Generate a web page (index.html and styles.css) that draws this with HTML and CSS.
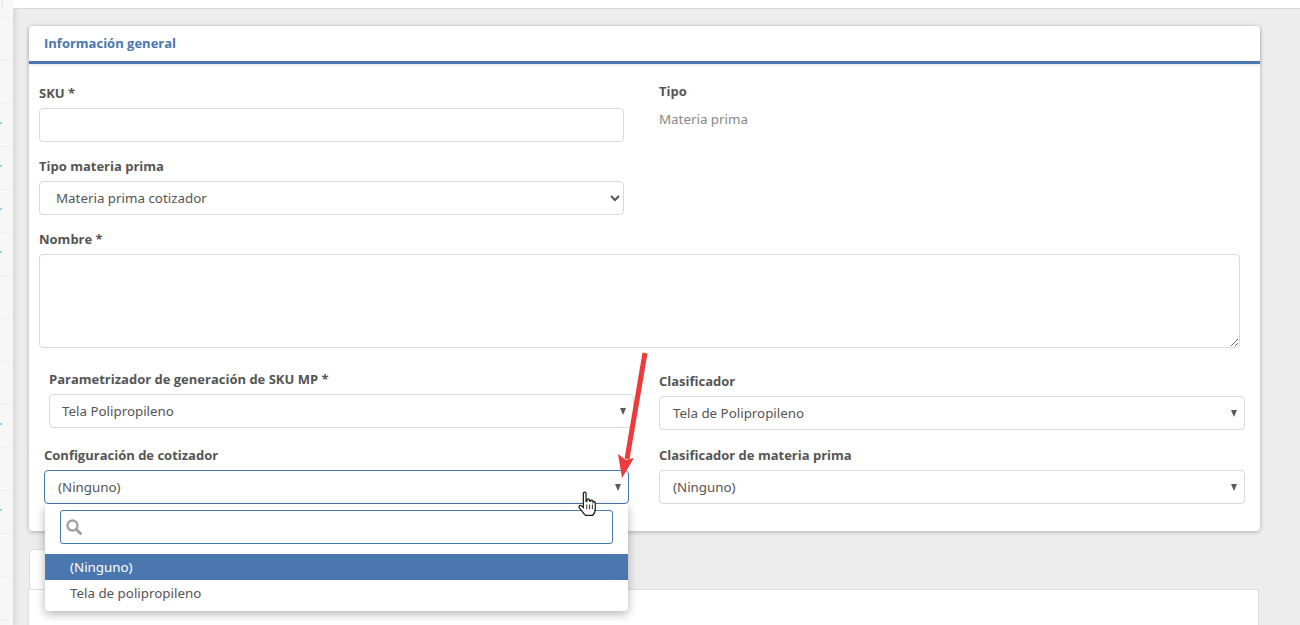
FILE: index.html
```html
<!DOCTYPE html>
<html lang="es">
<head>
  <meta charset="UTF-8">
  <title>Información general</title>
  <link rel="stylesheet" href="styles.css">
</head>
<body>
  <aside class="sidebar">
    <div class="side-top"><span class="side-box"></span></div>
    <div class="side-row"></div>
    <div class="side-row"></div>
    <div class="side-row"><i></i></div>
    <div class="side-row"><i></i></div>
    <div class="side-row"><i></i></div>
    <div class="side-row"><i></i></div>
    <div class="side-row"></div>
    <div class="side-row"></div>
    <div class="side-row"></div>
    <div class="side-row"><i></i></div>
    <div class="side-row"></div>
    <div class="side-row"><i></i></div>
    <div class="side-row"></div>
    <div class="side-row"></div>
  </aside>

  <main class="main">
    <div class="topbar"></div>

    <section class="card">
      <h3 class="card-title">Información general</h3>
      <div class="card-body">
        <div class="top-grid">
          <div class="col-left">
            <div class="field sku">
              <label>SKU *</label>
              <input type="text" class="input">
            </div>
            <div class="field tipo-mp">
              <label>Tipo materia prima</label>
              <select class="input native">
                <option>Materia prima cotizador</option>
              </select>
            </div>
          </div>
          <div class="col-right">
            <label>Tipo</label>
            <p class="static">Materia prima</p>
          </div>
        </div>

        <div class="field nombre">
          <label>Nombre *</label>
          <textarea class="input area"></textarea>
        </div>

        <div class="pick-grid">
          <div class="pick pick-sku">
            <label>Parametrizador de generación de SKU MP *</label>
            <div class="combo"><span>Tela Polipropileno</span><b class="caret"></b></div>
          </div>
          <div class="pick pick-clas">
            <label>Clasificador</label>
            <div class="combo"><span>Tela de Polipropileno</span><b class="caret"></b></div>
          </div>
          <div class="pick pick-conf">
            <label>Configuración de cotizador</label>
            <div class="combo open"><span>(Ninguno)</span><b class="caret"></b></div>
            <div class="dropdown">
              <div class="search">
                <svg width="16" height="16" viewBox="0 0 16 16"><circle cx="6.500" cy="6.500" r="5" fill="none" stroke="#a3a3a3" stroke-width="2.400"/><path d="M10.300 10.300l4.200 4.200" stroke="#a3a3a3" stroke-width="3" stroke-linecap="round"/></svg>
              </div>
              <div class="opt selected">(Ninguno)</div>
              <div class="opt">Tela de polipropileno</div>
            </div>
          </div>
          <div class="pick pick-mp">
            <label>Clasificador de materia prima</label>
            <div class="combo"><span>(Ninguno)</span><b class="caret"></b></div>
          </div>
        </div>
      </div>
    </section>

    <section class="tabs">
      <div class="tab"></div>
      <div class="tab-panel"></div>
    </section>
  </main>

  <svg class="arrow" width="44" height="132" viewBox="0 0 44 132">
    <path d="M39 2L21 108" stroke="#ee3a3a" stroke-width="5" fill="none"/>
    <path d="M12 103L16 127L28 107L20 109Z" fill="#ee3a3a"/>
  </svg>

  <svg class="hand" width="21" height="27" viewBox="0 0 20 26">
    <path d="M6 2.500c0-1.800 2.600-1.800 2.600 0V10l1-.3V8.600c0-1.400 2.300-1.400 2.400 0v1.200l1-.1c.2-1.300 2.200-1.100 2.300.3l.1.800c.5-1 2.100-.8 2.100.5v5.500c0 2.700-1.500 5.700-2.700 6.700H8c-1.600-1.500-3.200-4-5.300-6.500-1.700-2.100-.5-3.800 1.100-3l2.200 1.900z" fill="#fff" stroke="#1d1d1d" stroke-width="1.200"/>
    <path d="M9.300 13v4.500M12 13v4.500M14.700 13v4.500" stroke="#1d1d1d" stroke-width=".9"/>
  </svg>
</body>
</html>
```

FILE: styles.css
```css
* { box-sizing: border-box; }
html, body { height: 100%; }
body {
  margin: 0;
  height: 625px;
  overflow: hidden;
  display: flex;
  position: relative;
  background: #ededed;
  font-family: "Noto Sans", "Open Sans", sans-serif;
  font-size: 13.35px;
  color: #555;
}
label {
  display: block;
  font-family: "Open Sans", sans-serif;
  font-weight: 700;
  color: #555;
  font-size: 13px;
  line-height: 18px;
}

.sidebar { width: 13px; flex: none; background: #f7f7f7; box-shadow: 2px 0 6px rgba(0,0,0,.12); }
.side-top { height: 18px; border-bottom: 1px solid #f0f0f0; }
.side-box { display: block; width: 3px; height: 8px; border: 1px solid #e2e2e2; border-width: 0 1px 1px 0; border-radius: 0 0 2px 0; }
.side-row { height: 43px; border-bottom: 1px solid #f0f0f0; position: relative; }
.side-row i { position: absolute; left: 0; top: 18px; width: 2px; height: 2px; background: #8fd4f2; }

.main { flex: 1; min-width: 0; }
.topbar { height: 9px; background: #fff; border-bottom: 1px solid #d8d8d8; }

.card {
  width: 1231px;
  margin: 17px 0 0 16px;
  background: #fff;
  border-radius: 4px;
  box-shadow: 0 1px 4px rgba(0,0,0,.28);
}
.card-title {
  margin: 0;
  height: 38px;
  padding: 8px 15px 0;
  font-family: "Open Sans", sans-serif;
  font-size: 13px;
  line-height: 18px;
  font-weight: 700;
  color: #4a77ae;
  border-bottom: 3px solid #4a77ae;
  box-shadow: 0 1px 3px rgba(0,0,0,.12);
}
.card-body { padding: 0 10px; height: 467px; }

.top-grid { display: flex; }
.col-left { width: 585px; }
.col-right { margin-left: 35px; padding-top: 18px; }
.static { margin: 10px 0 0; color: #888; line-height: 18px; }

.field label { margin-bottom: 6px; }
.sku { padding-top: 20px; }
.tipo-mp { padding-top: 15px; }
.nombre { padding-top: 15px; width: 1201px; }

.input {
  display: block;
  width: 100%;
  height: 34px;
  border: 1px solid #d9d9d9;
  border-radius: 4px;
  background: #fff;
  color: #555;
  font: inherit;
}
.native { padding-left: 12px; }
.area { height: 94px; }

.pick-grid { position: relative; height: 165px; }
.pick { position: absolute; }
.pick-sku { left: 10px; top: 22px; width: 585px; }
.pick-clas { left: 620px; top: 24px; width: 586px; }
.pick-conf { left: 5px; top: 98px; width: 585px; }
.pick-mp { left: 620px; top: 98px; width: 586px; }
.pick label { margin-bottom: 6px; }

.combo {
  height: 34px;
  border: 1px solid #d9d9d9;
  border-radius: 4px;
  padding: 0 12px 0 13px;
  display: flex;
  align-items: center;
  justify-content: space-between;
  background: #fff;
  color: #555;
}
.pick-sku .combo { padding-left: 12px; }
.combo.open { border-color: #4a77ae; }
.caret {
  width: 0;
  height: 0;
  margin-right: -5px;
  border-left: 3.5px solid transparent;
  border-right: 3.5px solid transparent;
  border-top: 7px solid #5a5a5a;
}

.dropdown {
  position: absolute;
  left: 1px;
  right: 1px;
  top: 58px;
  height: 107px;
  background: #fff;
  border-radius: 0 0 4px 4px;
  box-shadow: 0 3px 10px rgba(0,0,0,.3);
  padding-top: 6px;
  z-index: 2;
}
.search {
  height: 34px;
  margin: 0 15px 10px;
  border: 1px solid #4a77ae;
  border-radius: 3px;
  padding: 8px 0 0 5px;
}
.search svg { display: block; }
.opt { height: 26px; line-height: 26px; padding-left: 25px; color: #555; }
.opt.selected { background: #4a77ae; color: #fff; }

.tabs { margin: 18px 0 0 15px; }
.tab { width: 300px; height: 41px; margin-left: 1px; background: #fff; border: 1px solid #ddd; border-bottom: 0; border-radius: 4px 4px 0 0; }
.tab-panel { height: 60px; width: 1231px; margin-top: -1px; border: 1px solid #ddd; background: #fff; }

.arrow { position: absolute; left: 606px; top: 351px; z-index: 3; }
.hand { position: absolute; left: 577px; top: 491px; z-index: 3; }
```
